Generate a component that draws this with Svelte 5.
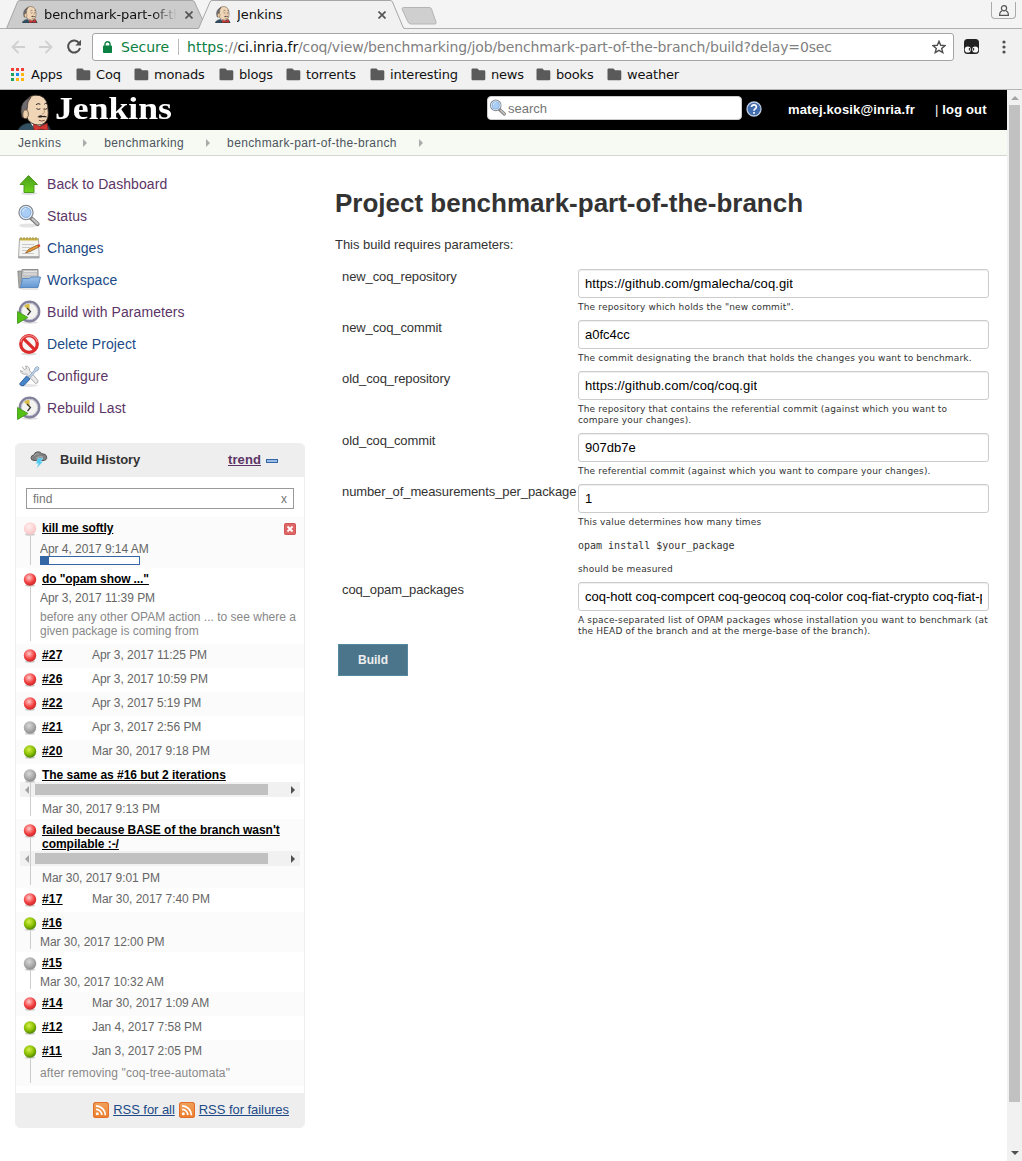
<script>
  const bookmarks = [
    { name: 'Coq', w: 58 }, { name: 'monads', w: 85 }, { name: 'blogs', w: 67 }, { name: 'torrents', w: 84 },
    { name: 'interesting', w: 101 }, { name: 'news', w: 65 }, { name: 'books', w: 71 }, { name: 'weather', w: 80 },
  ];
  const crumbs = ['Jenkins', 'benchmarking', 'benchmark-part-of-the-branch'];
  const tasks = [
    { icon: 'up', label: 'Back to Dashboard', visited: true },
    { icon: 'search', label: 'Status', visited: true },
    { icon: 'notepad', label: 'Changes' },
    { icon: 'folder', label: 'Workspace' },
    { icon: 'clock', label: 'Build with Parameters', visited: true },
    { icon: 'delete', label: 'Delete Project' },
    { icon: 'tools', label: 'Configure', visited: true },
    { icon: 'clock', label: 'Rebuild Last', visited: true },
  ];
  const builds = [
    { ball: 'pale', name: 'kill me softly', date: 'Apr 4, 2017 9:14 AM', kind: 'running', h: 51 },
    { ball: 'red', name: 'do "opam show ..."', date: 'Apr 3, 2017 11:39 PM', kind: 'stacked', h: 76, note: 'before any other OPAM action ... to see where a given package is coming from' },
    { ball: 'red', name: '#27', date: 'Apr 3, 2017 11:25 PM', kind: 'inline', h: 24 },
    { ball: 'red', name: '#26', date: 'Apr 3, 2017 10:59 PM', kind: 'inline', h: 24 },
    { ball: 'red', name: '#22', date: 'Apr 3, 2017 5:19 PM', kind: 'inline', h: 24 },
    { ball: 'grey', name: '#21', date: 'Apr 3, 2017 2:56 PM', kind: 'inline', h: 24 },
    { ball: 'green', name: '#20', date: 'Mar 30, 2017 9:18 PM', kind: 'inline', h: 24 },
    { ball: 'grey', name: 'The same as #16 but 2 iterations', date: 'Mar 30, 2017 9:13 PM', kind: 'scroll', h: 55 },
    { ball: 'red', name: "failed because BASE of the branch wasn't compilable :-/", date: 'Mar 30, 2017 9:01 PM', kind: 'scroll', h: 69 },
    { ball: 'red', name: '#17', date: 'Mar 30, 2017 7:40 PM', kind: 'inline', h: 24 },
    { ball: 'green', name: '#16', date: 'Mar 30, 2017 12:00 PM', kind: 'stacked', h: 40 },
    { ball: 'grey', name: '#15', date: 'Mar 30, 2017 10:32 AM', kind: 'stacked', h: 40 },
    { ball: 'red', name: '#14', date: 'Mar 30, 2017 1:09 AM', kind: 'inline', h: 24 },
    { ball: 'green', name: '#12', date: 'Jan 4, 2017 7:58 PM', kind: 'inline', h: 24 },
    { ball: 'green', name: '#11', date: 'Jan 3, 2017 2:05 PM', kind: 'inline', h: 46, note: 'after removing "coq-tree-automata"' },
  ];
  const params = [
    { name: 'new_coq_repository', value: 'https://github.com/gmalecha/coq.git', help: ['The repository which holds the "new commit".'] },
    { name: 'new_coq_commit', value: 'a0fc4cc', help: ['The commit designating the branch that holds the changes you want to benchmark.'] },
    { name: 'old_coq_repository', value: 'https://github.com/coq/coq.git', help: ['The repository that contains the referential commit (against which you want to', 'compare your changes).'] },
    { name: 'old_coq_commit', value: '907db7e', help: ['The referential commit (against which you want to compare your changes).'] },
    { name: 'number_of_measurements_per_package', value: '1', help: ['This value determines how many times'], code: 'opam install $your_package', after: 'should be measured' },
    { name: 'coq_opam_packages', value: 'coq-hott coq-compcert coq-geocoq coq-color coq-fiat-crypto coq-fiat-parsers', help: ['A space-separated list of OPAM packages whose installation you want to benchmark (at', 'the HEAD of the branch and at the merge-base of the branch).'] },
  ];
  const balls = { red: ['#fcc', '#f44040', '#c92626'], pale: ['#fee', '#fcd3d3', '#f5c4c4'], grey: ['#d8d8d8', '#a8a8a8', '#8a8a8a'], green: ['#d5f04a', '#86bc00', '#4a8200'] };
</script>

{#snippet butler(w, h)}
  <svg class="butler" width={w} height={h} viewBox="0 0 34 38">
    <path d="M0 38V36q3-5 9-6h17q6 1 7 8z" fill="#335061" stroke="#1a2a33" stroke-width=".8" />
    <path d="M12 29l5 7 9-6z" fill="#fff" />
    <path d="M7 16Q6 2 17 1.200q11-.7 13 10.800l.6 7q.4 10-7 12.500-8 1.500-13.500-4.500Q7 22 7 16z" fill="#f0d6b7" stroke="#3a2f28" stroke-width=".9" />
    <path d="M3.500 24Q.5 12 7 6.500L13 3q-4.500 5-4 12l-1 6-2.500 4z" fill="#6d6b6d" stroke="#2b2320" stroke-width=".7" />
    <path d="M5 17.500q3.500-3 5 1t-2 7q-5 0-3-8z" fill="#ecd0ab" stroke="#5d4a3a" stroke-width=".8" />
    <path d="M18 11q2-2 4.500-.5m4 0q1.500-1.500 3-.5M18.500 15q2 1.500 4 .2m3.500 0q1.800 1.200 3.500-.4" fill="none" stroke="#2b2320" stroke-width="1" />
    <path d="M25.500 15q3 5-1.500 5.500" fill="none" stroke="#b28c68" stroke-width=".9" />
    <path d="M19.500 23.500q3-2.800 5.500-.8 2-1 4.500 1-2 .6-4.500 0-2.500 1.200-5.500-.2z" fill="#2b2320" />
    <path d="M21 27q3 1.600 6 0" fill="none" stroke="#7d4b36" stroke-width="1" />
    <path d="M15.500 31l7 2.500 7-3.500 1 7.500-7-1.500-7.500 2z" fill="#d33833" stroke="#81201c" stroke-width=".8" />
  </svg>
{/snippet}

{#snippet folder()}
  <svg width="15" height="13" viewBox="0 0 15 13"><path d="M2 .5h4.500L8 2.200h5a1.300 1.300 0 0 1 1.300 1.300V11A1.300 1.300 0 0 1 13 12.300H2A1.300 1.300 0 0 1 .5 11V2A1.300 1.300 0 0 1 2 .5z" fill="#5a5a5a" /></svg>
{/snippet}

{#snippet lens()}
  <path d="M14 14l6.500 6" stroke="#7b7b7b" stroke-width="4.200" stroke-linecap="round" /><path d="M15.500 15l5 4.800" stroke="#c4c4c4" stroke-width="2.200" stroke-linecap="round" />
  <circle cx="9" cy="8.500" r="7" fill="#a9cdf5" stroke="#858b93" stroke-width="1.400" /><circle cx="9" cy="8.500" r="5.800" fill="none" stroke="#eef3f8" stroke-width="1.200" /><circle cx="9" cy="8.500" r="5" fill="none" stroke="#6f9bd0" stroke-width=".7" /><path d="M5.500 9q-.5-5 5-5-4 1-5 5z" fill="#e6f2ff" />
{/snippet}

{#snippet taskIcon(name)}
  <svg width="24" height="24" viewBox="0 0 24 24">
    {#if name === 'up'}
      <ellipse cx="12" cy="21.500" rx="8" ry="1.500" fill="#ddd" />
      <path d="M11.500 3.500L20.500 12.500H17V20.500H7V12.500H3z" fill="url(#leaf)" stroke="#4d9c20" />
    {:else if name === 'search'}
      <ellipse cx="11" cy="21.500" rx="9" ry="2" fill="#e3e3e3" />{@render lens()}
    {:else if name === 'notepad'}
      <path d="M2.500 2.500h19l.7 19.500H1.500z" fill="#f4f4f2" stroke="#aaa" /><path d="M2 21h20" stroke="#999" stroke-width="1.500" />
      <path d="M3 2.500h18v2H3z" fill="#d3b93c" /><path d="M4 1v3m3-3v3m3-3v3m3-3v3m3-3v3m3-3v3" stroke="#a8953c" />
      <path d="M5 8.500h12M5 11.500h8M5 14.500h5M5 17.500h12" stroke="#c9c9c9" /><path d="M8.500 17l3.500-4 8.500-4 1.500 2-9 4.500z" fill="#e79a35" stroke="#8d5a20" stroke-width=".8" /><path d="M20 9l2.500-.8 1 2-2 1z" fill="#d9412d" />
    {:else if name === 'folder'}
      <path d="M.8 3H5l1 17H2z" fill="#aaa" stroke="#808080" stroke-width=".7" /><path d="M5 1.500h16V14H4z" fill="#c4c4c4" stroke="#8c8c8c" /><path d="M7 3.500h13M6.500 6h13" stroke="#e4e4e4" />
      <path d="M5.500 10.500h7l1.500-1.500h9.500L21 19.500H3.500z" fill="url(#blue)" stroke="#5b8ac2" />
      <path d="M5 21h16" stroke="#ddd" stroke-width="1.500" />
    {:else if name === 'clock'}
      <ellipse cx="13" cy="22.500" rx="8" ry="1.200" fill="#ddd" /><circle cx="12.500" cy="11.500" r="9.700" fill="#f3f3f0" stroke="#82829c" stroke-width="2.400" /><circle cx="12.500" cy="11.500" r="8.200" fill="none" stroke="#c4c4d0" stroke-width="1" />
      <path d="M12.500 11.500L7 6q2.500-2.200 5.500-2.200z" fill="#d9bd48" /><path d="M10 8l3.500 3.500L10.500 15" fill="none" stroke="#333" stroke-width="1.200" />
      <path d="M.6 11.500L10.800 17.500.6 23.400z" fill="#55c014" stroke="#479c22" />
    {:else if name === 'delete'}
      <ellipse cx="12" cy="22" rx="8" ry="1.500" fill="#ddd" /><circle cx="12" cy="12" r="8.300" fill="#f6f6f6" stroke="#dc2b2b" stroke-width="3.200" /><path d="M6.300 6.300l11.400 11.400" stroke="#dc2b2b" stroke-width="3.200" /><path d="M3.700 10a8.600 8.600 0 0 1 16.600 0" fill="none" stroke="#ef8585" stroke-width="1.300" />
    {:else}
      <ellipse cx="12" cy="21.500" rx="9" ry="1.500" fill="#e5e5e5" />
      <path d="M5 2.500l2.500 3 2-1L8.500 2q4.500.5 4 4.500l8.500 10q.5 3-2.500 3L9.500 10Q4 11 3.500 6.500l2.500 1.500" fill="#e9e9e9" stroke="#a5a5a5" stroke-width=".9" />
      <path d="M11.500 13L17.500 6 18 4l2.500-1.500L22 4l-1 2.500-2 .5-6 7" fill="#c4d5ea" stroke="#8ea7c5" stroke-width=".9" /><path d="M9.500 12l3.500 3-6 6.500q-3 1.500-4.500-1.500z" fill="#4886ca" stroke="#2b5b95" stroke-width=".9" />
    {/if}
  </svg>
{/snippet}

{#snippet rss()}
  <svg width="16" height="16" viewBox="0 0 16 16"><rect width="16" height="16" rx="2.500" fill="#e2702a" /><rect x="1" y="1" width="14" height="14" rx="2" fill="url(#feed)" /><circle cx="4.300" cy="11.800" r="1.500" fill="#fff" /><path d="M3 7.300a5.800 5.800 0 0 1 5.800 5.800M3 3.800a9.400 9.400 0 0 1 9.400 9.400" fill="none" stroke="#fff" stroke-width="1.700" /></svg>
{/snippet}

<svg class="defs" width="0" height="0">
  <defs>
    <linearGradient id="leaf" x2="0" y2="1"><stop stop-color="#4a9c1d" /><stop offset="1" stop-color="#6cd31b" /></linearGradient>
    <linearGradient id="blue" x2="0" y2="1"><stop stop-color="#9dc1e8" /><stop offset="1" stop-color="#6398d3" /></linearGradient>
    <linearGradient id="feed" x2="0" y2="1"><stop stop-color="#f0a05a" /><stop offset="1" stop-color="#ec7f2e" /></linearGradient>
    {#each Object.entries(balls) as [name, c]}
      <radialGradient id={'ball-' + name} cx=".42" cy=".35" r=".65"><stop stop-color={c[0]} /><stop offset=".65" stop-color={c[1]} /><stop offset="1" stop-color={c[2]} /></radialGradient>
    {/each}
  </defs>
</svg>

<div class="window">
  <div class="tabs">
    <svg class="tab-shapes" width="1022" height="29" viewBox="0 0 1022 29">
      <rect width="1022" height="29" fill="#f4f4f4" /><path d="M0 28.500h1022" stroke="#b0b0b0" />
      <path d="M6.500 28.500L17.500 2Q18 .5 20 .5H192q2 0 2.500 1.500l12 26.500z" fill="#ccc" stroke="#a6a6a6" />
      <path d="M198.500 29L210 2Q210.500.5 212 .5H390q2 0 2.500 1.500L403 27q.5 2 2 2z" fill="#f1f1f1" /><path d="M198.500 28.500L210 2Q210.500.5 212 .5H390q2 0 2.500 1.500L403 27q.5 1.500 2 1.500" fill="none" stroke="#a6a6a6" />
      <path d="M403.500 7.500H429q2 0 2.500 1.500L436 22q.5 2-1 2H411q-2 0-3-2L402 9q0-1.500 1.500-1.500z" fill="#cfcfcf" stroke="#b5b5b5" />
    </svg>
    <div class="tab first">{@render butler(16, 17)}<span class="tab-title fade">benchmark-part-of-the</span></div>
    <svg class="close" width="8" height="8" viewBox="0 0 8 8"><path d="M.5.5l7 7m0-7l-7 7" stroke="#555" stroke-width="1.700" /></svg>
    <div class="tab second">{@render butler(16, 17)}<span class="tab-title">Jenkins</span></div>
    <svg class="close" width="8" height="8" viewBox="0 0 8 8"><path d="M.5.5l7 7m0-7l-7 7" stroke="#555" stroke-width="1.700" /></svg>
    <div class="profile"><svg width="10" height="11" viewBox="0 0 10 11"><circle cx="5" cy="3.300" r="2.600" fill="none" stroke="#555" stroke-width="1.200" /><path d="M3 5.800Q.6 6.500.6 10.300h8.800Q9.400 6.500 7 5.800" fill="none" stroke="#555" stroke-width="1.200" /></svg></div>
  </div>

  <div class="toolbar">
    <svg class="arrow" width="14" height="14" viewBox="0 0 14 14"><path d="M14 7H1.500M7.500 1L1.500 7l6 6" fill="none" stroke="#d0d0d0" stroke-width="1.800" /></svg>
    <svg class="arrow" width="14" height="14" viewBox="0 0 14 14"><path d="M0 7h12.500M6.500 1l6 6-6 6" fill="none" stroke="#d0d0d0" stroke-width="1.800" /></svg>
    <svg class="reload" width="16" height="16" viewBox="0 0 16 16"><path d="M12.200 4.200A6 6 0 1 0 13 9" fill="none" stroke="#505050" stroke-width="2" /><path d="M14 .8v5.700H8.300z" fill="#505050" /></svg>
    <div class="omnibox">
      <svg class="lock" width="9" height="12" viewBox="0 0 9 12"><rect y="4.500" width="9" height="7.500" rx=".8" fill="#0b8043" /><path d="M2 5V3a2.500 2.200 0 0 1 5 0v2" fill="none" stroke="#0b8043" stroke-width="1.400" /></svg>
      <span class="secure">Secure</span><i class="divider"></i>
      <span class="url"><b>https</b>://<em>ci.inria.fr</em>/coq/view/benchmarking/job/benchmark-part-of-the-branch/build?delay=0sec</span>
      <svg class="star" width="14" height="14" viewBox="0 0 14 14"><path d="M7 1.300l1.700 4 4.300.3-3.300 2.800 1.100 4.200L7 10.300l-3.800 2.300 1.100-4.200L1 5.600l4.300-.3z" fill="none" stroke="#505050" stroke-width="1.400" /></svg>
    </div>
    <svg class="ext" width="15" height="15" viewBox="0 0 15 15"><path d="M3.500 0h8Q15 0 15 3.500v8q0 3.500-3.500 3.500h-8Q0 15 0 11.500v-8Q0 0 3.500 0z" fill="#222" /><circle cx="3.800" cy="10.500" r="3.100" fill="#f8f8f8" /><circle cx="11.200" cy="10.500" r="3.100" fill="#f8f8f8" /><path d="M5.500 9v2.500M9.500 9v2.500" stroke="#333" stroke-width="1.300" /></svg>
    <svg class="menu" width="4" height="14" viewBox="0 0 4 14"><circle cx="2" cy="2" r="1.600" fill="#505050" /><circle cx="2" cy="7" r="1.600" fill="#505050" /><circle cx="2" cy="12" r="1.600" fill="#505050" /></svg>
  </div>

  <div class="bookmarks">
    <div class="bookmark apps">
      <svg width="13" height="13" viewBox="0 0 13 13"><path d="M0 0h3v3H0zM5 0h3v3H5zM10 0h3v3h-3z" fill="#f03e36" /><path d="M0 5h3v3H0zM0 10h3v3H0z" fill="#1fa35c" /><path d="M5 5h3v3H5z" fill="#1a8cf0" /><path d="M10 5h3v3h-3zM5 10h3v3H5zM10 10h3v3h-3z" fill="#fbb70a" /></svg>
      <span>Apps</span>
    </div>
    {#each bookmarks as b}
      <div class="bookmark" style:width={b.w + 'px'}>{@render folder()}<span>{b.name}</span></div>
    {/each}
  </div>

  <div class="viewport">
    <div class="page">
      <header class="masthead">
        <div class="logo">{@render butler(34, 37)}<span class="wordmark">Jenkins</span></div>
        <div class="search"><svg width="18" height="18" viewBox="0 0 24 24">{@render lens()}</svg><span>search</span></div>
        <svg class="help" width="16" height="16" viewBox="0 0 16 16"><circle cx="8" cy="8" r="7" fill="#416cae" stroke="#bccbe2" stroke-width="1.300" /><path d="M5.500 6Q5.700 3.800 8 3.800T10.400 6Q10.300 7.200 9 7.900 8 8.500 8 9.700M8 11v1.700" fill="none" stroke="#fff" stroke-width="1.700" /></svg>
        <div class="user">matej.kosik@inria.fr</div><div class="logout"><span>|</span> log out</div>
      </header>
      <nav class="crumbs">
        {#each crumbs as c}<span>{c}</span><i></i>{/each}
      </nav>

      <div class="columns">
        <aside>
          <ul class="tasks">
            {#each tasks as t}<li class:visited={t.visited}>{@render taskIcon(t.icon)}<span>{t.label}</span></li>{/each}
          </ul>
          <section class="history">
            <div class="history-head">
              <svg width="18" height="17" viewBox="0 0 18 17"><path d="M4 9.500Q.7 9.300 1 6.500 1.400 4 4 4 4.500.8 8 .8q3 0 4 2 4-.3 4.800 3.200Q17 9.500 13 9.500z" fill="#808080" stroke="#5a5a5a" /><path d="M4 5q2-3 5-2m-3 4q4-3 7-1" fill="none" stroke="#aaa" /><path d="M8 7h5l-2.500 3.500H13L7 16.700l1.500-4.300H6z" fill="#52c8f0" stroke="#a6e6fb" stroke-width=".5" /></svg>
              <strong>Build History</strong><a class="trend">trend</a><i class="collapse"></i>
            </div>
            <div class="find"><span>find</span><span>x</span></div>
            {#each builds as b, i}
              <div class="build {b.kind}" class:odd={i % 2 === 0} style:height={b.h + 'px'}>
                <div class="marker">
                  <svg width="14" height="14" viewBox="0 0 14 14"><ellipse cx="7" cy="12.500" rx="5" ry="1.200" fill="#ccc" /><circle cx="7" cy="6.500" r="6.200" fill={'url(#ball-' + b.ball + ')'} /></svg>
                  {#if b.h > 24}<i></i>{/if}
                </div>
                <div class="info">
                  <div class="line"><a>{b.name}</a>{#if b.kind === 'inline'}<time>{b.date}</time>{/if}</div>
                  {#if b.kind === 'scroll'}<div class="hscroll"><i class="left"></i><i class="thumb"></i><i class="right"></i></div>{/if}
                  {#if b.kind !== 'inline'}<time>{b.date}</time>{/if}
                  {#if b.kind === 'running'}<div class="progress"><i></i></div>{/if}
                  {#if b.note}<p>{b.note}</p>{/if}
                </div>
                {#if b.kind === 'running'}
                  <svg class="stop" width="12" height="12" viewBox="0 0 12 12"><rect x=".5" y=".5" width="11" height="11" rx="1" fill="#de6666" stroke="#cf5454" /><path d="M3.500 3.500l5 5m0-5l-5 5" stroke="#fff" stroke-width="1.800" /></svg>
                {/if}
              </div>
            {/each}
            <div class="feeds">{@render rss()}<a>RSS for all</a>{@render rss()}<a>RSS for failures</a></div>
          </section>
        </aside>

        <main>
          <h1>Project benchmark-part-of-the-branch</h1>
          <p class="intro">This build requires parameters:</p>
          <div class="params">
            {#each params as p}
              <div class="name">{p.name}</div>
              <div class="setting">
                <div class="field" class:address={p.value.startsWith('http')}><span>{p.value}</span></div>
                <div class="description">
                  {#each p.help as line}<div>{line}</div>{/each}
                  {#if p.code}<pre>{p.code}</pre><div>{p.after}</div>{/if}
                </div>
              </div>
            {/each}
          </div>
          <button>Build</button>
        </main>
      </div>
    </div>
    <div class="vscroll"><i class="up"></i><i class="bar"></i><i class="down"></i></div>
  </div>
</div>

<style>
  :global(body) { margin: 0; background: #fff; }
  .defs { position: absolute; }
  svg { display: block; flex: none; }
  .window { width: 1022px; height: 1161px; overflow: hidden; background: #fff; font-family: 'Liberation Sans', Arial, sans-serif; display: flex; flex-direction: column; }

  .tabs { position: relative; height: 29px; flex: none; display: flex; font: 13px 'DejaVu Sans', sans-serif; color: #111; }
  .tab-shapes { position: absolute; left: 0; top: 0; }
  .tab { position: relative; display: flex; align-items: center; gap: 6px; height: 29px; }
  .tab.first { margin-left: 22px; width: 163px; }
  .tab.second { margin-left: 22px; width: 163px; }
  .tab-title { line-height: 29px; white-space: nowrap; overflow: hidden; letter-spacing: -0.1px; }
  .fade { width: 133px; -webkit-mask-image: linear-gradient(90deg, #000 82%, transparent); mask-image: linear-gradient(90deg, #000 82%, transparent); }
  .close { position: relative; margin-top: 11px; }
  .profile { position: relative; margin: 2px 6px 0 auto; width: 23px; height: 16px; border: 1px solid #aaa; border-top: 0; border-radius: 0 0 4px 4px; display: flex; justify-content: center; align-items: center; }

  .toolbar { flex: none; height: 35px; background: #f1f1f1; display: flex; align-items: center; padding-left: 11px; }
  .arrow { margin-right: 14px; }
  .reload { margin-right: 9px; }
  .omnibox { width: 860px; height: 26px; margin-top: 1px; background: #fff; border: 1px solid #a5a5a5; border-radius: 3px; display: flex; align-items: center; font: 14px 'DejaVu Sans', sans-serif; }
  .lock { margin: 0 9px 0 10px; }
  .secure { color: #0b8043; width: 57px; }
  .divider { width: 1px; height: 16px; background: #bbb; margin-right: 8px; }
  .url { color: #808080; letter-spacing: -0.15px; white-space: nowrap; width: 745px; }
  .url b { font-weight: normal; color: #0b8043; letter-spacing: 0.15px; }
  .url em { font-style: normal; color: #111; }
  .ext { margin-left: 10px; }
  .menu { margin-left: 23px; }

  .bookmarks { flex: none; height: 25px; background: #f1f1f1; border-bottom: 1px solid #b5b5b5; display: flex; font: 13px 'DejaVu Sans', sans-serif; letter-spacing: -0.2px; color: #111; }
  .bookmark { display: flex; align-items: center; gap: 5px; height: 21px; flex: none; }
  .bookmark.apps { padding-left: 11px; gap: 7px; width: 65px; }

  .viewport { flex: 1; display: flex; min-height: 0; }
  .page { width: 1007px; }
  .vscroll { width: 15px; background: #f1f1f1; display: flex; flex-direction: column; align-items: center; }
  .vscroll .up, .vscroll .down { border: 4px solid transparent; }
  .vscroll .up { border-top: 0; border-bottom-color: #a3a3a3; margin-top: 6px; margin-bottom: 5px; }
  .vscroll .bar { width: 11px; height: 997px; background: #c1c1c1; }
  .vscroll .down { border-bottom: 0; border-top-color: #505050; margin-top: auto; margin-bottom: 6px; }

  .masthead { height: 40px; background: #000; color: #fff; display: flex; align-items: flex-start; overflow: hidden; }
  .logo { display: flex; width: 469px; padding: 4px 0 0 18px; }
  .wordmark { font: bold 31px/29px 'Liberation Serif', serif; margin-left: 3px; transform: scaleX(1.15); transform-origin: 0 0; }
  .search { width: 253px; height: 22px; margin-top: 6px; border: 1px solid #ccc; border-radius: 4px; background: #fff; display: flex; align-items: center; gap: 1px; font-size: 13px; color: #757575; }
  .search svg { margin-left: 1px; }
  .help { margin: 11px 26px 0 4px; }
  .user, .logout { font-size: 13px; font-weight: bold; line-height: 40px; letter-spacing: 0.15px; white-space: nowrap; }
  .user { width: 147px; }
  .logout span { font-weight: normal; }
  .crumbs { height: 25px; background: #f6faf2; border-bottom: 1px solid #d3d7cf; padding-left: 18px; display: flex; align-items: center; font-size: 12px; color: #4d545d; }
  .crumbs span { letter-spacing: 0.37px; }
  .crumbs i { border: 4px solid transparent; border-left: 4px solid #aaa; border-right: 0; margin: 0 17px 0 22px; }

  .columns { display: flex; }
  aside { width: 335px; padding: 12px 0 0 15px; box-sizing: border-box; }
  .tasks { list-style: none; margin: 0; padding: 0 0 0 2px; }
  .tasks li { height: 32px; display: flex; align-items: center; gap: 6px; font-size: 14px; letter-spacing: 0.07px; color: #204a87; }
  .tasks li.visited { color: #5c3566; }

  .history { width: 290px; height: 685px; margin-top: 19px; box-sizing: border-box; border: 1px solid #eee; border-radius: 5px; display: flex; flex-direction: column; overflow: hidden; }
  .history-head { height: 31px; padding-bottom: 2px; background: #eee; display: flex; align-items: center; font-size: 13px; line-height: 15px; font-weight: bold; color: #333; padding-left: 14px; flex: none; }
  .history-head strong { margin-left: 12px; width: 168px; letter-spacing: -0.05px; }
  .trend { color: #5c3566; text-decoration: underline; letter-spacing: 0.1px; }
  .collapse { width: 10px; height: 2px; border: 1px solid #3465a4; background: #9bbce5; margin: 3px 0 0 5px; }
  .find { margin: 11px 10px 8px; height: 19px; flex: none; border: 1px solid #999; display: flex; justify-content: space-between; align-items: center; padding: 0 6px; font-size: 12px; color: #757575; }
  .build { display: flex; flex: none; position: relative; font-size: 12px; box-sizing: border-box; }
  .odd { background: #fbfbfb; }
  .marker { width: 14px; margin: 5px 0 3px 7px; display: flex; flex-direction: column; align-items: center; }
  .marker i { width: 1px; flex: 1; background: #ccc; }
  .info { flex: 1; padding: 4px 0 0 5px; min-width: 0; }
  .line { display: flex; line-height: 14px; }
  .info a { font-weight: bold; color: #000; text-decoration: underline; letter-spacing: -0.03px; }
  .running .line a, .stacked .line a { letter-spacing: -0.1px; }
  .inline .line a { width: 21px; letter-spacing: 0.2px; }
  .inline .line time { margin: 0 0 0 29px; }
  time { display: block; color: #666; line-height: 14px; margin: 5px 0 0 -2px; letter-spacing: -0.04px; }
  .info p { margin: 5px 0 0 -2px; color: #888; line-height: 14px; }
  .inline .info p { margin-top: 8px; letter-spacing: 0.1px; }
  .running time { margin-top: 7px; }
  .scroll time { margin: 5px 0 0; }
  .progress { width: 98px; height: 7px; border: 1px solid #3465a4; background: #fff; margin-left: -2px; }
  .progress i { display: block; width: 8px; height: 7px; background: #3465a4; }
  .stop { position: absolute; left: 268px; top: 6px; }
  .hscroll { position: relative; z-index: -1; width: 280px; height: 15px; margin-left: -22px; background: #f1f1f1; display: flex; align-items: center; }
  .scroll { z-index: 0; }
  .hscroll .left { border: 4px solid transparent; border-left: 0; border-right-color: #a3a3a3; margin: 0 6px 0 5px; }
  .hscroll .thumb { width: 233px; height: 11px; background: #c1c1c1; }
  .hscroll .right { border: 4px solid transparent; border-right: 0; border-left: 4px solid #505050; margin-left: 23px; }
  .feeds { margin-top: auto; height: 34px; background: #eee; display: flex; align-items: center; justify-content: flex-end; gap: 4px; padding-right: 15px; font-size: 13px; color: #204a87; flex: none; }
  .feeds a { text-decoration: underline; letter-spacing: -0.05px; padding-bottom: 1px; }

  main { color: #333; padding-top: 29px; width: 655px; }
  h1 { font-size: 26px; line-height: 36px; margin: 0; white-space: nowrap; }
  .intro { font-size: 13px; line-height: 16px; margin: 16px 0; letter-spacing: -0.03px; }
  .params { display: grid; grid-template-columns: 236px 411px; padding-left: 7px; font-size: 13px; }
  .name { line-height: 16px; white-space: nowrap; letter-spacing: -0.1px; }
  .setting { padding-bottom: 7px; }
  .field { height: 27px; width: 409px; border: 1px solid #ccc; border-radius: 3px; box-shadow: inset 0 1px 1px #eee; display: flex; align-items: center; color: #000; white-space: nowrap; }
  .field.address { letter-spacing: 0.1px; }
  .field span { margin: 0 6px; overflow: hidden; }
  .description { font: 9px/11px 'DejaVu Sans', sans-serif; letter-spacing: 0.17px; padding-top: 4px; white-space: nowrap; }
  .description pre { font: 10px/12px 'DejaVu Sans Mono', monospace; letter-spacing: 0; margin: 12px 0; }
  button { display: block; margin: 0 0 0 3px; width: 70px; height: 32px; border: 1px solid #5788a1; background: #4b758b; color: #eee; font: bold 12px 'Liberation Sans', sans-serif; }
</style>
